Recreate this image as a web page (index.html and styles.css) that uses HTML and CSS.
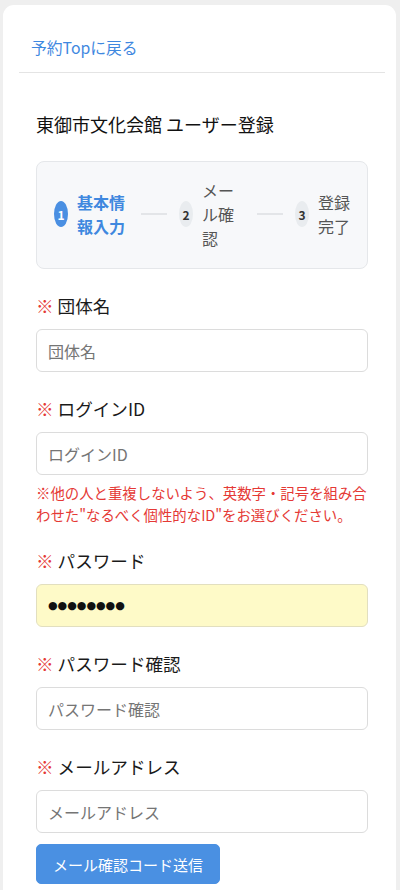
FILE: index.html
```html
<!DOCTYPE html>
<html lang="ja">
<head>
<meta charset="utf-8">
<title>ユーザー登録</title>
<link rel="stylesheet" href="styles.css">
</head>
<body>
<div class="card">
  <div class="card-header">
    <a class="back-link" href="#">予約Topに戻る</a>
  </div>
  <div class="card-body">
    <h1 class="title">東御市文化会館 ユーザー登録</h1>
    <div class="steps">
      <div class="step step-active">
        <span class="step-num">1</span>
        <span class="step-label label-1">基本情報入力</span>
      </div>
      <span class="step-line"></span>
      <div class="step">
        <span class="step-num">2</span>
        <span class="step-label label-2">メール確認</span>
      </div>
      <span class="step-line"></span>
      <div class="step">
        <span class="step-num">3</span>
        <span class="step-label label-3">登録完了</span>
      </div>
    </div>

    <div class="field">
      <label class="field-label"><span class="req">※</span> 団体名</label>
      <input class="input" type="text" placeholder="団体名">
    </div>

    <div class="field field-help">
      <label class="field-label"><span class="req">※</span> ログインID</label>
      <input class="input" type="text" placeholder="ログインID">
      <p class="help">※他の人と重複しないよう、英数字・記号を組み合わせた"なるべく個性的なID"をお選びください。</p>
    </div>

    <div class="field">
      <label class="field-label"><span class="req">※</span> パスワード</label>
      <div class="input input-filled">●●●●●●●●</div>
    </div>

    <div class="field">
      <label class="field-label"><span class="req">※</span> パスワード確認</label>
      <input class="input" type="password" placeholder="パスワード確認">
    </div>

    <div class="field field-last">
      <label class="field-label"><span class="req">※</span> メールアドレス</label>
      <input class="input" type="email" placeholder="メールアドレス">
    </div>

    <button class="btn" type="button">メール確認コード送信</button>
  </div>
</div>
</body>
</html>
```
FILE: styles.css
```css
* { box-sizing: border-box; }
html, body {
  margin: 0;
  padding: 0;
  background: #efefef;
  font-family: "Noto Sans CJK JP", "Noto Sans", sans-serif;
  color: #212529;
  overflow: hidden;
}
.card {
  margin: 5px 4px 0 3px;
  background: #ffffff;
  border-radius: 11px 11px 0 0;
  padding: 0 11px 60px 16px;
  min-height: 900px;
}
.card-header {
  padding: 30px 0 12px 12px;
  border-bottom: 1px solid #e4e4e4;
}
.back-link {
  color: #3f88df;
  text-decoration: none;
  font-size: 15.8px;
  line-height: 24px;
}
.card-body {
  padding: 0 17px;
}
.title {
  margin: 38px 0 24px;
  font-size: 18px;
  font-weight: 400;
  line-height: 26px;
  color: #111;
}
.steps {
  display: flex;
  align-items: center;
  background: #f7f8fa;
  border: 1px solid #e5e7ea;
  border-radius: 8px;
  padding: 16px 10px 18px 17px;
  margin-bottom: 24px;
}
.step {
  display: flex;
  align-items: center;
  gap: 9px;
  flex-shrink: 0;
}
.step-num {
  width: 14px;
  height: 26px;
  border-radius: 50%;
  background: #e9ecef;
  color: #333;
  font-size: 12px;
  font-weight: 700;
  display: flex;
  align-items: center;
  justify-content: center;
  flex-shrink: 0;
}
.step-active .step-num {
  background: #4a8fe2;
  color: #fff;
}
.step-label {
  font-size: 16px;
  line-height: 24px;
  color: #555;
}
.step-active .step-label {
  color: #3f88df;
  font-weight: 700;
}
.label-1 { width: 49px; }
.label-2 { width: 40px; }
.label-3 { width: 34px; }
.step-line {
  width: 26px;
  height: 2px;
  background: #e3e5e8;
  margin: 0 12px 0 15px;
  flex-shrink: 0;
}
.field {
  margin-bottom: 24px;
}
.field-help {
  margin-bottom: 22px;
}
.field-last {
  margin-bottom: 11px;
}
.field-label {
  display: block;
  font-size: 17.6px;
  line-height: 26px;
  margin-bottom: 10px;
  color: #1a1a1a;
}
.req {
  color: #e53935;
}
.input {
  display: block;
  width: 100%;
  height: 43px;
  border: 1px solid #dcdcdc;
  border-radius: 6px;
  padding: 0 11px;
  font-family: "Noto Sans CJK JP", "Noto Sans", sans-serif;
  font-size: 16px;
  background: #fff;
  color: #212529;
  outline: none;
}
.input::placeholder {
  color: #757575;
}
.input-filled {
  background: #fefac8;
  border-color: #e2dfbf;
  display: flex;
  align-items: center;
  font-family: "DejaVu Sans", sans-serif;
  font-size: 11px;
  letter-spacing: 0;
  color: #111;
}
.help {
  margin: 7px 0 0;
  font-size: 14.4px;
  line-height: 22px;
  color: #e53935;
}
.btn {
  display: block;
  width: 184px;
  height: 40px;
  background: #4a90e2;
  color: #fff;
  border: 1px solid #4a90e2;
  border-radius: 5px;
  font-family: "Noto Sans CJK JP", "Noto Sans", sans-serif;
  font-size: 15px;
  padding: 0;
}
```
